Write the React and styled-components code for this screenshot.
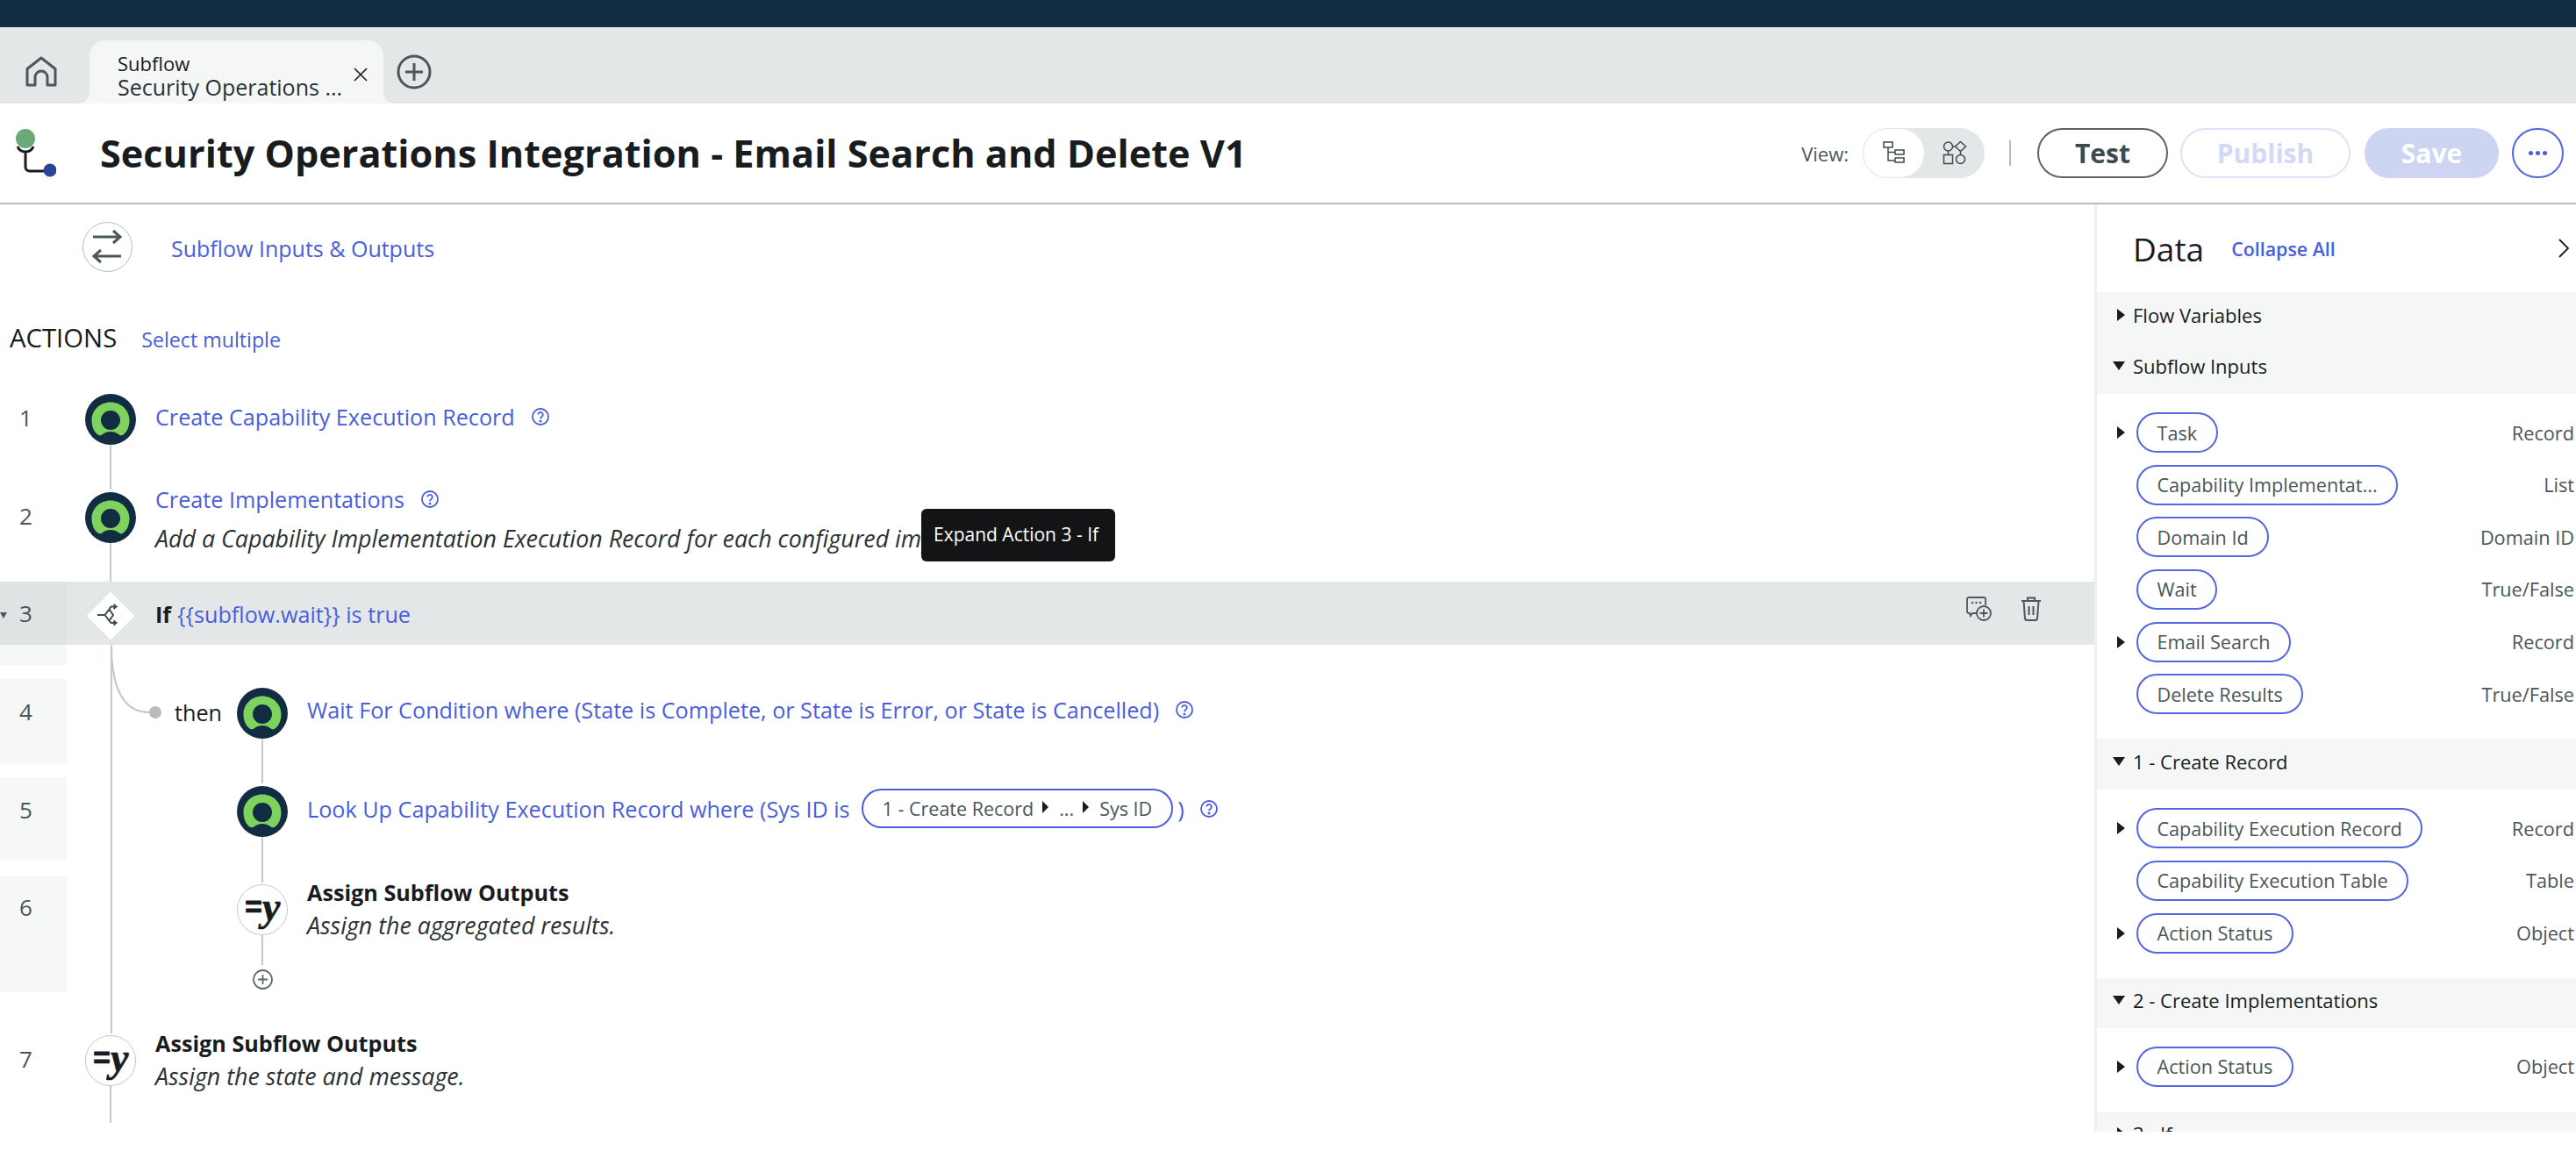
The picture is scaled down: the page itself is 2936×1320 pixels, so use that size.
import React from 'react'
import styled, { createGlobalStyle } from 'styled-components'

const BLUE = '#4a5ddb'
const INK = '#181c1e'
const SLATE = '#4a5659'

const GlobalStyle = createGlobalStyle`
  html, body {
    margin: 0;
    padding: 0;
    background: #fff;
    font-family: 'Open Sans', 'Liberation Sans', sans-serif;
    color: ${INK};
  }
  * { box-sizing: border-box; }
`

const Page = styled.div`
  width: 2936px;
  height: 1320px;
  overflow: hidden;
  display: flex;
  flex-direction: column;
`
const TopBar = styled.div`
  height: 31px;
  background: #122c42;
`
const TabBar = styled.div`
  height: 87px;
  background: #e4e7e8;
  display: flex;
  align-items: flex-end;
  padding-left: 29px;
`
const HomeBtn = styled.div`
  width: 36px;
  height: 36px;
  margin: 0 37px 18px 0;
`
const Tab = styled.div`
  position: relative;
  width: 335px;
  height: 72px;
  background: #f5f7f7;
  border-radius: 18px 18px 0 0;
  padding: 12px 0 0 32px;
  &::before, &::after {
    content: '';
    position: absolute;
    bottom: 0;
    width: 12px;
    height: 12px;
    background: radial-gradient(circle at 0 0, transparent 11.5px, #f5f7f7 12px);
  }
  &::before { left: -12px; }
  &::after { right: -12px; transform: scaleX(-1); }
`
const TabKind = styled.div`
  font-size: 22px;
  line-height: 28px;
  font-weight: 500;
`
const TabName = styled.div`
  font-size: 25px;
  line-height: 26px;
  color: #2a3235;
`
const TabClose = styled.div`
  position: absolute;
  right: 18px;
  top: 31px;
  width: 16px;
  height: 16px;
  display: flex;
`
const AddTab = styled.div`
  width: 40px;
  height: 40px;
  margin: 0 0 16px 15px;
`

const Header = styled.div`
  height: 115px;
  border-bottom: 2px solid #b4bbbd;
  display: flex;
  align-items: center;
  padding: 0 14px 0 18px;
`
const Title = styled.h1`
  margin: 0 0 0 50px;
  font-size: 43.25px;
  font-weight: 700;
  color: ${INK};
  white-space: nowrap;
`
const HeaderTools = styled.div`
  margin-left: auto;
  display: flex;
  align-items: center;
`
const ViewLabel = styled.span`
  font-size: 22px;
  color: ${SLATE};
  margin-right: 16px;
`
const Toggle = styled.div`
  width: 139px;
  height: 57px;
  border-radius: 29px;
  background: #e4e7e8;
  display: flex;
`
const ToggleOption = styled.div`
  height: 57px;
  width: ${(p) => (p.$on ? '71px' : '68px')};
  border-radius: 29px;
  background: ${(p) => (p.$on ? '#fff' : 'transparent')};
  border: ${(p) => (p.$on ? '1px solid #e4e7e8' : 'none')};
  display: flex;
  align-items: center;
  justify-content: center;
`
const Separator = styled.div`
  width: 2px;
  height: 29px;
  background: #b4bbbd;
  margin: 0 30px 0 28px;
`
const Button = styled.div`
  height: 57px;
  width: ${(p) => p.$w}px;
  border-radius: 29px;
  border: 2px solid ${(p) => p.$border};
  background: ${(p) => p.$bg || '#fff'};
  color: ${(p) => p.$color};
  margin-left: ${(p) => p.$ml || 0}px;
  font-size: 30px;
  font-weight: 700;
  display: flex;
  align-items: center;
  justify-content: center;
`
const Dots = styled.div`
  display: flex;
  gap: 3px;
  span {
    width: 5px;
    height: 5px;
    border-radius: 50%;
    background: ${BLUE};
  }
`

const Body = styled.div`
  height: 1057px;
  display: flex;
`
const Canvas = styled.div`
  position: relative;
  width: 2387px;
  flex: none;
`
const InputsRow = styled.div`
  display: flex;
  align-items: center;
  padding: 20px 0 0 94px;
`
const SwapBadge = styled.div`
  width: 57px;
  height: 57px;
  border-radius: 50%;
  border: 1.5px solid #b8bdbf;
  display: flex;
`
const InputsLink = styled.a`
  margin: 3px 0 0 44px;
  font-size: 25px;
  line-height: 30px;
  color: ${BLUE};
`
const ActionsHead = styled.div`
  display: flex;
  align-items: baseline;
  height: 30px;
  margin: 60px 0 49px 11px;
`
const ActionsTitle = styled.span`
  font-size: 29.3px;
  line-height: 30px;
  color: ${INK};
`
const SelectLink = styled.a`
  font-size: 23.2px;
  margin-left: 28px;
  color: ${BLUE};
`
const Row = styled.div`
  display: grid;
  grid-template-columns: 76px 101px 1fr;
  height: ${(p) => p.$h}px;
  background: ${(p) => (p.$active ? '#e4e7e8' : 'transparent')};
`
const NumCell = styled.div`
  position: relative;
  padding: ${(p) => p.$top}px 0 0 22px;
  font-size: 26px;
  line-height: 26px;
  color: ${SLATE};
  background: ${(p) => (p.$tone === 'dark' ? '#dfe3e4' : p.$tone === 'light' ? '#f6f8f8' : 'transparent')};
  grid-row: ${(p) => p.$row || 'auto'};
  grid-column: 1;
`
const RowCaret = styled.span`
  position: absolute;
  left: 0;
  top: 35px;
  border-left: 4px solid transparent;
  border-right: 4px solid transparent;
  border-top: 7px solid ${SLATE};
`
const Rail = styled.div`
  display: flex;
  flex-direction: column;
  align-items: center;
  width: 58px;
  margin-left: ${(p) => p.$ml ?? 21}px;
  padding-top: ${(p) => p.$top || 0}px;
`
const Line = styled.div`
  flex: 1;
  width: 2px;
  background: #c4c8ca;
`
const RowBody = styled.div`
  padding-top: ${(p) => p.$top}px;
  min-width: 0;
`
const ActiveBody = styled(RowBody)`
  display: flex;
  align-items: flex-start;
  padding-right: 60px;
`
const TitleLine = styled.div`
  display: flex;
  align-items: center;
  margin-top: -2px;
  font-size: 25.2px;
  line-height: 26px;
  white-space: nowrap;
  color: ${(p) => (p.$bold ? INK : BLUE)};
  font-weight: ${(p) => (p.$bold ? 700 : 400)};
`
const Strong = styled.b`
  color: ${INK};
  font-weight: 700;
  margin-right: 7px;
`
const Note = styled.div`
  font-size: 26.8px;
  line-height: 30px;
  font-style: italic;
  white-space: nowrap;
  color: #2a3235;
  margin-top: ${(p) => p.$mt}px;
`
const Help = styled.span`
  display: inline-flex;
  margin-left: ${(p) => p.$ml || 19}px;
`
const RowTools = styled.div`
  margin-left: auto;
  display: flex;
  gap: 32px;
  margin-top: -10px;
  height: 30px;
  align-items: center;
`
const ValuePill = styled.span`
  display: inline-flex;
  align-items: center;
  height: 45px;
  margin: 0 5px 0 13px;
  padding: 0 22px;
  border: 2px solid ${BLUE};
  border-radius: 23px;
  font-size: 21.5px;
  color: ${SLATE};
`
const PillCaret = styled.span`
  display: inline-block;
  margin: 0 12px 4px 10px;
  border-top: 7px solid transparent;
  border-bottom: 7px solid transparent;
  border-left: 7px solid ${INK};
`
const BranchBlock = styled.div`
  display: grid;
  grid-template-columns: 76px 101px 1fr;
  grid-template-rows: 23px 16px 96px 16px 95px 17px 133px 47px;
`
const OuterRail = styled.div`
  position: relative;
  grid-column: 2;
  grid-row: 1 / -1;
  margin-left: 49.5px;
  width: 2px;
  background: #c4c8ca;
`
const BranchCurve = styled.svg`
  position: absolute;
  left: -50px;
  top: 0;
  width: 110px;
  height: 90px;
  overflow: visible;
`
const NestedFlow = styled.div`
  grid-column: 3;
  grid-row: 3 / -1;
  display: flex;
  flex-direction: column;
`
const Step = styled.div`
  display: grid;
  grid-template-columns: 93px 58px 1fr;
  column-gap: 0;
  height: ${(p) => p.$h}px;
`
const ThenLabel = styled.div`
  padding: 25px 0 0 22px;
  font-size: 25.2px;
  line-height: 26px;
  color: ${INK};
`
const StepBody = styled(RowBody)`
  padding-left: 22px;
`
const AddStep = styled.div`
  width: 23px;
  height: 23px;
  margin: 5px 0 0 111px;
`
const Badge = styled.div`
  width: 58px;
  height: 58px;
  flex: none;
  display: flex;
`
const AssignBadge = styled(Badge)`
  border: 1.5px solid #c4c8ca;
  border-radius: 50%;
  background: #fff;
  align-items: center;
  justify-content: center;
  font-family: 'Liberation Serif', serif;
  font-style: italic;
  font-weight: 700;
  font-size: 46px;
  line-height: 1;
  padding-bottom: 7px;
  color: ${INK};
  -webkit-text-stroke: 0.7px ${INK};
`
const EqSign = styled.span`
  font-family: 'Liberation Sans', sans-serif;
  font-size: 33px;
  font-weight: 700;
  margin-right: 1px;
  -webkit-text-stroke: 1.2px ${INK};
`
const Tooltip = styled.div`
  position: absolute;
  left: 1050px;
  top: 347px;
  width: 221px;
  height: 60px;
  border-radius: 6px;
  background: #131416;
  color: #fff;
  font-size: 21px;
  padding-left: 14px;
  padding-bottom: 2px;
  display: flex;
  align-items: center;
  white-space: nowrap;
`

const DataPanel = styled.aside`
  flex: 1;
  border-left: 3px solid #eef0f0;
  overflow: hidden;
`
const DataHead = styled.div`
  height: 100px;
  display: flex;
  align-items: center;
  padding: 0 7px 0 41px;
`
const DataTitle = styled.h2`
  margin: 0;
  font-size: 37px;
  font-weight: 500;
  color: ${INK};
`
const CollapseLink = styled.a`
  margin-left: 31px;
  font-size: 21.4px;
  font-weight: 600;
  color: ${BLUE};
`
const PanelClose = styled.div`
  margin-left: auto;
  display: flex;
`
const SectionGroup = styled.div`
  background: #f5f7f7;
`
const SectionHead = styled.div`
  display: flex;
  align-items: center;
  height: ${(p) => p.$h}px;
  padding: 0 0 7px 18px;
  font-size: 22px;
  color: ${INK};
`
const Caret = styled.span`
  width: ${(p) => p.$w || 23}px;
  flex: none;
  display: flex;
  padding-left: ${(p) => (p.$open ? 0 : p.$inset ?? 5)}px;
  &::before {
    content: '';
    ${(p) =>
      p.$open
        ? `border-left: 7.5px solid transparent; border-right: 7.5px solid transparent; border-top: 10px solid ${INK};`
        : `border-top: 7.5px solid transparent; border-bottom: 7.5px solid transparent; border-left: 9px solid ${INK};`}
  }
`
const PillList = styled.div`
  padding: 21px 2px 28px 22px;
  display: flex;
  flex-direction: column;
  gap: 13.67px;
`
const DataRow = styled.div`
  display: flex;
  align-items: center;
  height: 46px;
`
const CaretSlot = styled.div`
  width: 23px;
  flex: none;
  display: flex;
`
const DataPill = styled.span`
  height: 46px;
  padding: 0 21.5px;
  display: inline-flex;
  align-items: center;
  border: 2px solid #5566de;
  border-radius: 23px;
  font-size: 21.6px;
  color: ${SLATE};
  white-space: nowrap;
`
const DataType = styled.span`
  margin-left: auto;
  font-size: 21.7px;
  color: ${SLATE};
`

const GreenBadge = () => (
  <Badge>
    <svg width="58" height="58" viewBox="0 0 58 58">
      <circle cx="29" cy="29" r="29" fill="#122c42" />
      <path
        d="M29 9.5C41 9.5 50.5 18.5 50.5 30C50.5 37 48 43 44 46C42 48 39.5 47.5 38 46C35.5 44 32.5 43 29 43C25.5 43 22.5 44 20 46C18.5 47.5 16 48 14 46C10 43 7.5 37 7.5 30C7.5 18.5 17 9.5 29 9.5Z"
        fill="#7ed25e"
      />
      <circle cx="29" cy="30" r="11" fill="#122c42" />
    </svg>
  </Badge>
)

const IfBadge = () => (
  <Badge>
    <svg width="58" height="58" viewBox="0 0 58 58" fill="none">
      <polygon points="29,0.5 57.5,29 29,57.5 0.5,29" fill="#fff" stroke="#d4d8da" />
      <path
        d="M14 28h8.5l5-6.5 4.5 6.5-4.5 6.5-5-6.5M27.5 21.5l2-3h6M32.5 16l3 2.5-3 2.5M27.5 34.5l2 2.5h6M32.5 34.5l3 2.5-3 2.5"
        stroke="#414d50"
        strokeWidth="2"
      />
    </svg>
  </Badge>
)

const HelpIcon = ({ ml }) => (
  <Help $ml={ml}>
    <svg width="20" height="20" viewBox="0 0 20 20" fill="none" stroke={BLUE} strokeWidth="1.8">
      <circle cx="10" cy="10" r="9" />
      <path d="M7.2 7.6a2.8 2.8 0 1 1 4.3 2.4c-1 .6-1.5 1.1-1.5 2.3" />
      <circle cx="10" cy="15" r="0.6" fill={BLUE} />
    </svg>
  </Help>
)

const inputs = [
  { name: 'Task', type: 'Record', more: true },
  { name: 'Capability Implementat...', type: 'List' },
  { name: 'Domain Id', type: 'Domain ID' },
  { name: 'Wait', type: 'True/False' },
  { name: 'Email Search', type: 'Record', more: true },
  { name: 'Delete Results', type: 'True/False' },
]
const createRecord = [
  { name: 'Capability Execution Record', type: 'Record', more: true },
  { name: 'Capability Execution Table', type: 'Table' },
  { name: 'Action Status', type: 'Object', more: true },
]
const createImpl = [{ name: 'Action Status', type: 'Object', more: true }]

const Pills = ({ items }) => (
  <PillList>
    {items.map((item) => (
      <DataRow key={item.name}>
        <CaretSlot>{item.more && <Caret $inset={1} />}</CaretSlot>
        <DataPill>{item.name}</DataPill>
        <DataType>{item.type}</DataType>
      </DataRow>
    ))}
  </PillList>
)

export default function App() {
  return (
    <Page>
      <GlobalStyle />
      <TopBar />
      <TabBar>
        <HomeBtn>
          <svg width="36" height="36" viewBox="0 0 36 36" fill="none" stroke="#4b5759" strokeWidth="3" strokeLinejoin="round">
            <path d="M2 33V14.5L18 2l16 12.5V33H25V24a7 7 0 0 0-14 0v9H2Z" />
          </svg>
        </HomeBtn>
        <Tab>
          <TabKind>Subflow</TabKind>
          <TabName>Security Operations ...</TabName>
          <TabClose>
            <svg width="16" height="16" viewBox="0 0 16 16" stroke={INK} strokeWidth="1.6">
              <path d="M1 1l14 14M15 1L1 15" />
            </svg>
          </TabClose>
        </Tab>
        <AddTab>
          <svg width="40" height="40" viewBox="0 0 40 40" fill="none" stroke="#4b5759" strokeWidth="3">
            <circle cx="20" cy="20" r="18" />
            <path d="M20 10v20M10 20h20" />
          </svg>
        </AddTab>
      </TabBar>
      <Header>
        <svg width="46" height="56" viewBox="0 0 46 56" fill="none">
          <path d="M2 20c2 5 5 6 9 6s7-1 9-6" stroke={INK} strokeWidth="3" />
          <path d="M11 26v17c0 3 2 5 5 5h18" stroke={INK} strokeWidth="3" />
          <circle cx="11" cy="11" r="11" fill="#6aa97a" />
          <circle cx="39" cy="47" r="7.5" fill="#2a4597" />
        </svg>
        <Title>Security Operations Integration - Email Search and Delete V1</Title>
        <HeaderTools>
          <ViewLabel>View:</ViewLabel>
          <Toggle>
            <ToggleOption $on>
              <svg width="26" height="28" viewBox="0 0 26 28" fill="none" stroke="#3d484b" strokeWidth="1.5">
                <rect x="1" y="1" width="10" height="6" />
                <rect x="14" y="10" width="10" height="5" />
                <rect x="14" y="19" width="10" height="5" />
                <path d="M6 7v15h8M6 12.5h8" />
              </svg>
            </ToggleOption>
            <ToggleOption>
              <svg width="28" height="30" viewBox="0 0 28 30" fill="none" stroke="#3d484b" strokeWidth="1.5">
                <circle cx="6.5" cy="7" r="5" />
                <path d="M20.5 1.5l6 5.5-6 5.5-6-5.5zM11.5 7h3M6.5 12v4M20.5 12.500v4" />
                <rect x="1.5" y="16.5" width="10" height="10" />
                <circle cx="20.5" cy="21.5" r="5" />
              </svg>
            </ToggleOption>
          </Toggle>
          <Separator />
          <Button $w={149} $border="#5a6568" $color="#3f4a4c">Test</Button>
          <Button $w={194} $ml={14} $border="#dfe3f8" $color="#d3d9f5">Publish</Button>
          <Button $w={153} $ml={16} $border="#ced5f3" $bg="#ced5f3" $color="#fff">Save</Button>
          <Button $w={59} $ml={15} $border="#5566de" $color={BLUE}>
            <Dots><span /><span /><span /></Dots>
          </Button>
        </HeaderTools>
      </Header>
      <Body>
        <Canvas>
          <InputsRow>
            <SwapBadge>
              <svg width="54" height="54" viewBox="0 0 54 54" fill="none" stroke="#4b5759" strokeWidth="3">
                <path d="M11 16h31M34 9l8 7-8 7M43 38H12M20 31l-8 7 8 7" />
              </svg>
            </SwapBadge>
            <InputsLink>Subflow Inputs &amp; Outputs</InputsLink>
          </InputsRow>
          <ActionsHead>
            <ActionsTitle>ACTIONS</ActionsTitle>
            <SelectLink>Select multiple</SelectLink>
          </ActionsHead>

          <Row $h={109}>
            <NumCell $top={14}>1</NumCell>
            <Rail>
              <GreenBadge />
              <Line />
            </Rail>
            <RowBody $top={15}>
              <TitleLine>Create Capability Execution Record<HelpIcon /></TitleLine>
            </RowBody>
          </Row>
          <Row $h={105}>
            <NumCell $top={17}>2</NumCell>
            <Rail $top={3}>
              <GreenBadge />
              <Line />
            </Rail>
            <RowBody $top={0}>
              <TitleLine>Create Implementations<HelpIcon /></TitleLine>
              <Note $mt={17}>Add a Capability Implementation Execution Record for each configured implementation</Note>
            </RowBody>
          </Row>
          <Row $h={72} $active>
            <NumCell $top={23} $tone="dark"><RowCaret />3</NumCell>
            <Rail $top={10}>
              <IfBadge />
            </Rail>
            <ActiveBody $top={26}>
              <TitleLine><Strong>If</Strong>{'{{subflow.wait}} is true'}</TitleLine>
              <RowTools>
                <svg width="30" height="30" viewBox="0 0 30 30" fill="none" stroke="#4b5759" strokeWidth="1.8">
                  <path d="M12 20H7l-2 3-1-3H3a2 2 0 0 1-2-2V4a2 2 0 0 1 2-2h17a2 2 0 0 1 2 2v7" />
                  <path d="M7 8h.1M11.5 8h.1M16 8h.1" strokeWidth="2.4" strokeLinecap="round" />
                  <circle cx="20" cy="20" r="8" />
                  <path d="M20 15.5v9M15.5 20h9" />
                </svg>
                <svg width="24" height="30" viewBox="0 0 24 30" fill="none" stroke="#4b5759" strokeWidth="2">
                  <path d="M1 6h22M8 6V2.5h8V6M3.5 6l1.5 20a2.5 2.5 0 0 0 2.5 2h9a2.5 2.5 0 0 0 2.5-2l1.500-20M9.500 12v10M14.500 12v10" />
                </svg>
              </RowTools>
            </ActiveBody>
          </Row>

          <BranchBlock>
            <NumCell $row={1} $top={0} $tone="light" />
            <NumCell $row={3} $top={24} $tone="light">4</NumCell>
            <NumCell $row={5} $top={24} $tone="light">5</NumCell>
            <NumCell $row={7} $top={23} $tone="light">6</NumCell>
            <OuterRail>
              <BranchCurve viewBox="0 0 110 90" fill="none">
                <path d="M51 0C51 45 62 77 94 77" stroke="#c4c8ca" strokeWidth="2" />
                <circle cx="101" cy="77" r="7" fill="#babdc0" />
              </BranchCurve>
            </OuterRail>
            <NestedFlow>
              <Step $h={119}>
                <ThenLabel>then</ThenLabel>
                <Rail $ml={0} $top={10}>
                  <GreenBadge />
                  <Line />
                </Rail>
                <StepBody $top={24}>
                  <TitleLine>
                    Wait For Condition where (State is Complete, or State is Error, or State is Cancelled)
                    <HelpIcon />
                  </TitleLine>
                </StepBody>
              </Step>
              <Step $h={113}>
                <span />
                <Rail $ml={0} $top={3}>
                  <GreenBadge />
                  <Line />
                </Rail>
                <StepBody $top={8}>
                  <TitleLine>
                    Look Up Capability Execution Record where (Sys ID is
                    <ValuePill>
                      1 - Create Record<PillCaret />...<PillCaret />Sys ID
                    </ValuePill>
                    )
                    <HelpIcon ml={18} />
                  </TitleLine>
                </StepBody>
              </Step>
              <Step $h={94}>
                <span />
                <Rail $ml={0} $top={2}>
                  <AssignBadge><EqSign>=</EqSign>y</AssignBadge>
                  <Line />
                </Rail>
                <StepBody $top={0}>
                  <TitleLine $bold>Assign Subflow Outputs</TitleLine>
                  <Note $mt={10}>Assign the aggregated results.</Note>
                </StepBody>
              </Step>
              <AddStep>
                <svg width="23" height="23" viewBox="0 0 23 23" fill="none" stroke="#5d6a6e" strokeWidth="1.8">
                  <circle cx="11.5" cy="11.500" r="10.500" />
                  <path d="M11.500 6v11M6 11.500h11" />
                </svg>
              </AddStep>
            </NestedFlow>
          </BranchBlock>

          <Row $h={102}>
            <NumCell $top={16}>7</NumCell>
            <Rail $top={2}>
              <AssignBadge><EqSign>=</EqSign>y</AssignBadge>
              <Line />
            </Rail>
            <RowBody $top={0}>
              <TitleLine $bold>Assign Subflow Outputs</TitleLine>
              <Note $mt={10}>Assign the state and message.</Note>
            </RowBody>
          </Row>

          <Tooltip>Expand Action 3 - If</Tooltip>
        </Canvas>

        <DataPanel>
          <DataHead>
            <DataTitle>Data</DataTitle>
            <CollapseLink>Collapse All</CollapseLink>
            <PanelClose>
              <svg width="14" height="22" viewBox="0 0 14 22" fill="none" stroke={INK} strokeWidth="1.8">
                <path d="M2 1l10 10L2 21" />
              </svg>
            </PanelClose>
          </DataHead>
          <SectionGroup>
            <SectionHead $h={58}><Caret />Flow Variables</SectionHead>
            <SectionHead $h={58}><Caret $open />Subflow Inputs</SectionHead>
          </SectionGroup>
          <Pills items={inputs} />
          <SectionGroup>
            <SectionHead $h={58}><Caret $open />1 - Create Record</SectionHead>
          </SectionGroup>
          <Pills items={createRecord} />
          <SectionGroup>
            <SectionHead $h={57}><Caret $open />2 - Create Implementations</SectionHead>
          </SectionGroup>
          <Pills items={createImpl} />
          <SectionGroup>
            <SectionHead $h={58}><Caret />3 - If</SectionHead>
          </SectionGroup>
        </DataPanel>
      </Body>
    </Page>
  )
}
